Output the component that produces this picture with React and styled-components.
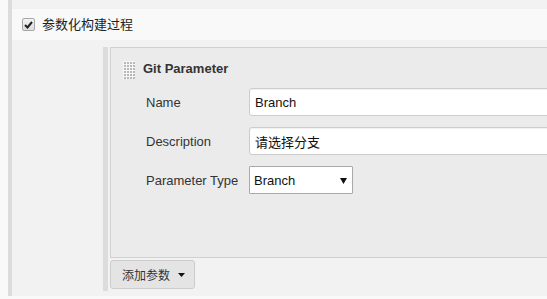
import styled, { createGlobalStyle } from "styled-components";

const GlobalStyle = createGlobalStyle`
  html, body {
    margin: 0;
    padding: 0;
    background: #f9f9f9;
    overflow: hidden;
  }
  body {
    font-family: "Liberation Sans", "Noto Sans CJK SC", sans-serif;
    font-size: 13px;
    color: #333;
  }
`;

const Page = styled.div`
  width: 547px;
  height: 299px;
  overflow: hidden;
`;

const Section = styled.div`
  margin-left: 8px;
  border-left: 4px solid #dcdcdc;
  background: #f2f2f2;
  padding: 9px 0 5px;
  height: 282px;
`;

const OptionRow = styled.div`
  display: flex;
  align-items: center;
  height: 31px;
  padding-left: 10px;
  background: #f9f9f9;
  gap: 7px;
`;

const CheckBox = styled.span`
  display: inline-flex;
  align-items: center;
  justify-content: center;
  width: 11px;
  height: 11px;
  border: 1px solid #a8a8a8;
  border-radius: 2px;
  background: linear-gradient(#f4f4f4, #dcdcdc);
`;

const OptionLabel = styled.span`
  font-size: 13px;
  line-height: 16px;
  color: #222;
`;

const Nested = styled.div`
  margin: 7px 0 0 91px;
  border-left: 5px solid #dcdcdc;
  padding-left: 2px;
  height: 244px;
`;

const Chunk = styled.div`
  width: 500px;
  height: 211px;
  border: 1px solid #d0d0d0;
  border-right: none;
  background: #ebebeb;
  padding-top: 13px;
  box-sizing: border-box;
`;

const ChunkHeader = styled.div`
  display: flex;
  align-items: flex-start;
  gap: 8px;
  padding-left: 12px;
  height: 18px;
`;

const Title = styled.span`
  font-weight: bold;
  font-size: 13px;
  line-height: 15px;
  color: #333;
`;

const Form = styled.div`
  display: grid;
  grid-template-columns: 103px 1fr;
  row-gap: 11px;
  padding-left: 35px;
  margin-top: 9px;
  align-items: center;
`;

const Label = styled.label`
  font-size: 13px;
  color: #333;
`;

const TextInput = styled.input`
  box-sizing: border-box;
  width: 400px;
  height: 28px;
  border: 1px solid #ccc;
  border-radius: 3px;
  background: #fff;
  padding: 0 5px;
  font-family: "Liberation Sans", "Noto Sans CJK SC", sans-serif;
  font-size: 13px;
  color: #111;
  box-shadow: inset 0 1px 1px rgba(0, 0, 0, 0.06);
  outline: none;
`;

const SelectWrap = styled.div`
  position: relative;
  width: 104px;
  height: 28px;
`;

const Select = styled.select`
  appearance: none;
  box-sizing: border-box;
  width: 104px;
  height: 28px;
  border: 1px solid #a9a9a9;
  border-radius: 1px;
  background: #fff;
  padding: 0 4px;
  font-family: "Liberation Sans", sans-serif;
  font-size: 13px;
  color: #111;
  outline: none;
`;

const Arrow = styled.svg`
  position: absolute;
  right: 6px;
  top: 12px;
  pointer-events: none;
`;

const AddButton = styled.button`
  display: flex;
  align-items: center;
  gap: 8px;
  margin-top: 2px;
  height: 29px;
  width: 85px;
  box-sizing: border-box;
  padding: 0 0 0 11px;
  border: 1px solid #ccc;
  border-radius: 3px;
  background: #e4e4e4;
  font-family: "Liberation Sans", "Noto Sans CJK SC", sans-serif;
  font-size: 12px;
  color: #333;
`;

const Handle = () => (
  <svg width="12" height="18" viewBox="0 0 12 18">
    <rect width="12" height="18" fill="#f7f7f7" />
    {[0, 1, 2, 3, 4, 5].map((r) =>
      [0, 1, 2, 3].map((c) => (
        <rect
          key={`${r}-${c}`}
          x={c * 3 + 1}
          y={r * 3 + 1}
          width="2"
          height="2"
          fill="#b8b8b8"
        />
      ))
    )}
  </svg>
);

const Caret = () => (
  <svg width="7" height="4" viewBox="0 0 7 4">
    <path d="M0 0 L7 0 L3.5 4 Z" fill="#111" />
  </svg>
);

const App = () => {
  return (
    <Page>
      <GlobalStyle />
      <Section>
        <OptionRow>
          <CheckBox>
            <svg width="9" height="8" viewBox="0 0 9 8">
              <path
                d="M1 4 L3.5 6.5 L8 1"
                fill="none"
                stroke="#222"
                strokeWidth="2"
              />
            </svg>
          </CheckBox>
          <OptionLabel>参数化构建过程</OptionLabel>
        </OptionRow>
        <Nested>
          <Chunk>
            <ChunkHeader>
              <Handle />
              <Title>Git Parameter</Title>
            </ChunkHeader>
            <Form>
              <Label>Name</Label>
              <TextInput defaultValue="Branch" />
              <Label>Description</Label>
              <TextInput defaultValue="请选择分支" />
              <Label>Parameter Type</Label>
              <SelectWrap>
                <Select defaultValue="Branch">
                  <option>Branch</option>
                  <option>Tag</option>
                  <option>Revision</option>
                </Select>
                <Arrow width="7" height="6" viewBox="0 0 7 6">
                  <path d="M0 0 L7 0 L3.5 6 Z" fill="#111" />
                </Arrow>
              </SelectWrap>
            </Form>
          </Chunk>
          <AddButton>
            添加参数
            <Caret />
          </AddButton>
        </Nested>
      </Section>
    </Page>
  );
};

export default App;
